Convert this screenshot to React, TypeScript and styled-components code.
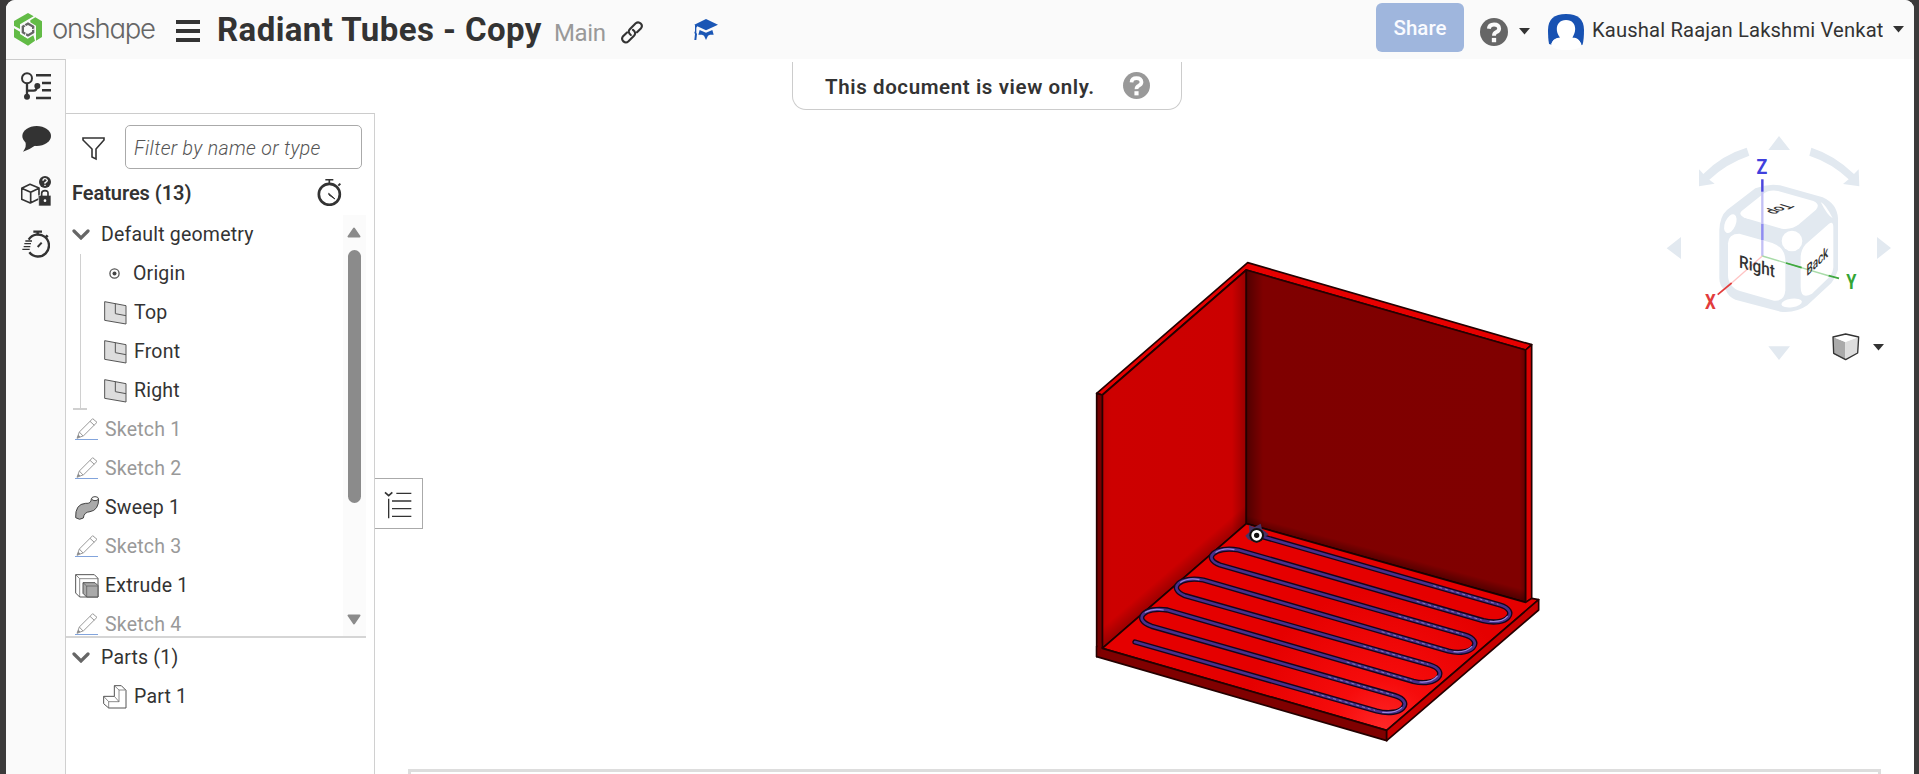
import React from 'react';
import styled, { createGlobalStyle, css } from 'styled-components';

const Global = createGlobalStyle`
  * { box-sizing: border-box; }
  html, body { margin: 0; padding: 0; background: #fff; }
  body { font-family: Roboto, "Liberation Sans", sans-serif; color: #333; overflow: hidden; }
  svg { display: block; flex: none; }
`;

const Window = styled.div`
  width: 1919px;
  height: 774px;
  background: #3b3a3a;
  padding: 0 5px 0 6px;
`;

const Page = styled.div`
  height: 774px;
  display: flex;
  flex-direction: column;
  background: #fff;
  border-radius: 9px 9px 0 0;
  overflow: hidden;
`;

const Header = styled.header`
  height: 59px;
  flex: none;
  display: flex;
  align-items: center;
  background: #fafafa;
  padding-left: 8px;
  white-space: nowrap;
`;

const Wordmark = styled.span`
  width: 121px;
  margin-left: 10px;
  margin-right: 1px;
  font: 300 27.5px/36px Inter, sans-serif;
  font-feature-settings: "cv11";
  letter-spacing: -1.35px;
  color: #666;
  padding-bottom: 3px;
`;

const Title = styled.h1`
  margin: 0 0 0 17px;
  width: 337px;
  font-size: 33px;
  line-height: 40px;
  font-weight: 700;
  letter-spacing: 0.42px;
`;

const Workspace = styled.span`
  width: 67px;
  padding-top: 6px;
  font-size: 24px;
  line-height: 30px;
  letter-spacing: -0.4px;
  color: #999;
`;

const Spacer = styled.div<{ $w?: number }>`
  ${(p) => (p.$w ? css`width: ${p.$w}px; flex: none;` : css`flex: 1;`)}
`;

const ShareButton = styled.button`
  width: 88px;
  height: 49px;
  flex: none;
  margin-bottom: 5px;
  border: 0;
  border-radius: 6px;
  background: #9fb6dd;
  color: #fafbff;
  font: 500 20.5px Roboto, sans-serif;
  padding: 2px 0 0;
`;

const UserName = styled.span`
  width: 291px;
  flex: none;
  overflow: hidden;
  margin-left: 8px;
  font-size: 20.2px;
  line-height: 28px;
  letter-spacing: 0.16px;
`;

const Main = styled.main`
  flex: 1;
  min-height: 0;
  display: flex;
`;

const Rail = styled.nav`
  width: 60px;
  flex: none;
  background: #fafafa;
  border-top: 1px solid #ccc;
  border-right: 1px solid #d0d0d0;
  display: flex;
  flex-direction: column;
  align-items: center;
  gap: 24px;
  padding: 12px 0 0 1px;
`;

const Panel = styled.aside`
  width: 309px;
  flex: none;
  margin-top: 54px;
  border-top: 1px solid #ccc;
  border-right: 1px solid #d0d0d0;
  display: flex;
  flex-direction: column;
`;

const FilterRow = styled.div`
  display: flex;
  align-items: center;
  padding: 11px 0 0 16px;
  gap: 20px;
  & > svg { margin-top: 3px; }
`;

const FilterInput = styled.div`
  width: 237px;
  height: 44px;
  border: 1px solid #aaa;
  border-radius: 5px;
  padding-left: 8px;
  font-size: 19.5px;
  font-style: italic;
  font-weight: 300;
  line-height: 45px;
  letter-spacing: 0.35px;
  color: #555;
`;

const PanelHeading = styled.div`
  height: 46px;
  display: flex;
  align-items: center;
  justify-content: space-between;
  padding: 1px 32px 0 6px;
  font-size: 20px;
  font-weight: 600;
  letter-spacing: -0.05px;
`;

const Scroller = styled.div`
  width: 300px;
  height: 423px;
  display: flex;
  border-bottom: 2px solid #d5d5d5;
  overflow: hidden;
`;

const List = styled.div`
  flex: 1;
`;

const Group = styled.div`
  border-left: 1px solid #d0d0d0;
  margin-left: 14px;
  height: 156px;
  position: relative;
  &::after {
    content: '';
    position: absolute;
    left: -8px;
    bottom: 0;
    width: 14px;
    height: 2px;
    background: #d0d0d0;
  }
`;

const Row = styled.div<{ $indent: number; $gap: number; $muted?: boolean }>`
  height: 39px;
  display: flex;
  align-items: center;
  padding-left: ${(p) => p.$indent}px;
  gap: ${(p) => p.$gap}px;
  font-size: 19.5px;
  letter-spacing: 0.2px;
  color: ${(p) => (p.$muted ? '#999' : '#333')};
`;

const Scrollbar = styled.div`
  width: 23px;
  background: #fbfbfb;
  display: flex;
  flex-direction: column;
  align-items: center;
  padding: 12px 1px 11px 0;
`;

const Thumb = styled.div`
  width: 13px;
  height: 253px;
  margin: 12px 0 auto;
  border-radius: 7px;
  background: #8b8b8b;
`;

const Canvas = styled.section`
  flex: 1;
  position: relative;
  overflow: hidden;
`;

const ListTab = styled.div`
  position: absolute;
  left: -1px;
  top: 419px;
  width: 49px;
  height: 51px;
  border: 1px solid #aaa;
  border-left: 0;
  background: #fff;
  display: flex;
  align-items: center;
  justify-content: center;
  padding-top: 2px;
`;

const Banner = styled.div`
  position: absolute;
  left: 417px;
  top: 3px;
  width: 390px;
  height: 48px;
  border: 1px solid #ccc;
  border-top: 0;
  border-radius: 0 0 14px 14px;
  display: flex;
  align-items: center;
  justify-content: space-between;
  padding: 0 31px 0 32px;
  font-size: 20.5px;
  font-weight: 600;
  letter-spacing: 0.6px;
`;

const BannerText = styled.span`
  padding-top: 2px;
`;

const Placed = styled.div<{ $x: number; $y: number }>`
  position: absolute;
  left: ${(p) => p.$x}px;
  top: ${(p) => p.$y}px;
`;

const BottomFrame = styled.div`
  position: absolute;
  left: 33px;
  right: 33px;
  top: 710px;
  height: 20px;
  border: 3px solid #ddd;
`;

const Logo = () => (
  <svg width="28" height="33" viewBox="0 0 84 99">
    <path d="M42 0 59 10 18 34V48L0 38V24ZM64 13 84 25V72L66 83V38L49 28V22ZM0 46 18 56V63L41 77 58 67 63 83 42 98 0 73Z" fill="#62bb46" />
    <path d="M42 28 61 39V60L42 71 23 60V39ZM42 36 30 43V56L42 63 54 56V43Z" fill="#666" fillRule="evenodd" />
    <path d="M28 31 37 42M62 48 50 51M32 72 37 58" stroke="#fafafa" strokeWidth="3" />
  </svg>
);

const MenuSvg = styled.svg`
  margin-top: 4px;
`;

const MenuIcon = () => (
  <MenuSvg width="24" height="23" fill="#333"><path d="M0 0h24v4H0zM0 9h24v4H0zM0 18h24v4H0z" /></MenuSvg>
);

const LinkSvg = styled.svg`
  margin-top: 5px;
`;

const LinkIcon = () => (
  <LinkSvg width="22" height="23" viewBox="0 0 22 23" fill="none" stroke="#333" strokeWidth="2.1" strokeLinecap="round">
    <path d="M9.8 14C7.4 12 7.2 10 8.8 8.2L14.7 2.3C18.2-.5 22.8 4 19.8 7.5L16 11.3" />
    <path d="M12 8.9C14.4 10.7 14.8 12.8 13 14.8L7.5 20.3C4 23.5-.8 19 2.1 15.2L6 11.4" />
  </LinkSvg>
);

const GradIcon = () => (
  <svg width="24" height="22" viewBox="0 0 72 66" fill="#1a56b5">
    <path d="M36 0 72 17 36 34 10 22 7 26V41L9 45 7 63H1L3 45 1 41 3 36V19L1 17ZM17 33 36 41 55 33 59 47 48 47 42 50 36 63 30 50 24 47 13 47Z" />
  </svg>
);

const Help = ({ size, color, bg }: { size: number; color: string; bg: string }) => (
  <svg width={size} height={size} viewBox="0 0 26 26">
    <circle cx="13" cy="13" r="13" fill={color} />
    <path d="M8.2 10Q8.5 6 13 6T17.8 9.8Q17.7 11.9 15.3 13.1T13 16.5" fill="none" stroke={bg} strokeWidth="3.6" />
    <rect x="11" y="18.5" width="4" height="4" fill={bg} />
  </svg>
);

const Caret = () => <svg width="11" height="7"><path d="M0 0H11L5.5 6.5Z" fill="#333" /></svg>;

const HelpMenu = styled.div`
  display: flex;
  align-items: center;
  gap: 11px;
  margin: 4px 18px 0 16px;
`;

const AvatarSvg = styled.svg`
  margin-top: 5px;
`;

const Avatar = () => (
  <AvatarSvg width="36" height="36" viewBox="0 0 102 108" preserveAspectRatio="none">
    <path d="M3 90Q0 75 0 48Q0 0 51 0T102 48Q102 76 98 92L51 104Z" fill="#1852b2" />
    <path d="M51 18C69 18 77 31 77 45C77 58 72 64 69 71C79 70 91 75 93 91Q85 108 51 108T10 91C12 76 24 71 34 71C30 64 25 58 25 45C25 31 34 18 51 18Z" fill="#fff" />
    <path d="M9 90Q14 74 34 71H69Q89 74 95 91L90 101Q51 116 14 101Z" fill="#fff" />
  </AvatarSvg>
);

const TreeIcon = () => (
  <svg width="30" height="28" viewBox="0 0 90 84" fill="none" stroke="#333">
    <circle cx="18" cy="19" r="15" strokeWidth="6" />
    <path d="M18 35V74M18 56H38Q47 56 48 44" strokeWidth="7" />
    <circle cx="18" cy="74" r="9" fill="#333" stroke="none" />
    <circle cx="49" cy="42" r="9" fill="#333" stroke="none" />
    <path d="M45 10H90M63 33H90M63 55H90M45 78H90" strokeWidth="7.5" />
  </svg>
);

const ChatIcon = () => (
  <svg width="29" height="28" viewBox="0 -6 87 84" fill="#333">
    <ellipse cx="44" cy="30" rx="43" ry="30" />
    <path d="M10 48Q15 61 3 77 23 71 42 57Z" />
  </svg>
);

const BoxLockIcon = () => (
  <svg width="30" height="30" viewBox="0 0 90 90" fill="none" stroke="#333">
    <path d="M27 25 2 37V70L28 81 54 68V36ZM2 37 29 49 54 37M29 49V80" strokeWidth="5" strokeLinejoin="round" />
    <circle cx="72" cy="18" r="18" fill="#333" stroke="none" />
    <path d="M66 14Q66 8 72 8T79 14Q78 18 72 20V23M72 26V30" stroke="#fff" strokeWidth="4" />
    <path d="M53 58H90V90H53Z" fill="#333" stroke="#fafafa" strokeWidth="2" />
    <path d="M62 60V52Q62 44 72 44T81 52V60" strokeWidth="5" />
    <circle cx="72" cy="74" r="4" fill="#fff" stroke="none" />
  </svg>
);

const FastWatchIcon = () => (
  <svg width="28" height="29" viewBox="0 0 84 87" fill="none" stroke="#333">
    <path d="M20 29A33 33 0 1 1 22 67" strokeWidth="7" />
    <path d="M34 5H60M47 5V16" strokeWidth="7" />
    <path d="M71 22 77 16" strokeWidth="8" />
    <path d="M47 51 59 38" strokeWidth="6" />
    <path d="M10 33H30M7 41H27M5 50H25M1 58H23" strokeWidth="4" />
  </svg>
);

const WatchIcon = () => (
  <svg width="25" height="27" viewBox="0 0 75 81" fill="none" stroke="#333">
    <circle cx="37" cy="46" r="31.5" strokeWidth="8" />
    <path d="M25 2H49M37 2V13" strokeWidth="5" />
    <path d="M64 20 70 14" strokeWidth="6" />
    <path d="M35 43 54 60 36 48Z" fill="#333" strokeWidth="3" />
  </svg>
);

const FunnelIcon = () => (
  <svg width="23" height="24" viewBox="0 0 23 24"><path d="M1 1H22V3L14 12V22L10 20V12L1 3Z" fill="none" stroke="#333" strokeWidth="1.6" /></svg>
);

const Chevron = () => (
  <svg width="18" height="11"><path d="M2 2 9 9 16 2" fill="none" stroke="#666" strokeWidth="3.2" strokeLinecap="round" /></svg>
);

const OriginIcon = () => (
  <svg width="11" height="11"><circle cx="5.5" cy="5.5" r="4.6" fill="none" stroke="#555" strokeWidth="1.3" /><circle cx="5.5" cy="5.5" r="2" fill="#444" /></svg>
);

const PlaneIcon = () => (
  <svg width="23" height="24" viewBox="0 0 69 72">
    <path d="M2 2 66 14V69L2 58Z" fill="#ddd" stroke="#555" strokeWidth="3" />
    <path d="M34 8V38L66 44" fill="none" stroke="#555" strokeWidth="3" />
  </svg>
);

const PencilIcon = () => (
  <svg width="24" height="25" viewBox="0 0 72 75">
    <path d="M6 64 13 45 53 5 66 16 26 56ZM13 45 24 57M45 13 58 25" fill="none" stroke="#999" strokeWidth="3" />
    <path d="M6 64 10 53 16 59Z" fill="#888" />
    <path d="M0 67.5H69" stroke="#82a4dc" strokeWidth="3" />
  </svg>
);

const SweepIcon = () => (
  <svg width="24" height="24" viewBox="0 0 72 72" stroke="#444" strokeWidth="3">
    <path d="M2 65Q0 24 32 22Q49 24 49 8L71 8Q71 43 45 47Q27 48 25 66Q14 74 2 65Z" fill="#aaa" />
    <ellipse cx="60" cy="8" rx="10" ry="6" fill="#fff" />
  </svg>
);

const ExtrudeIcon = () => (
  <svg width="24" height="24" viewBox="0 0 72 72" stroke="#555" strokeWidth="3">
    <path d="M2 2H58L69 13V69H14L2 57Z" fill="#fff" />
    <path d="M2 2 14 14H69M14 14V69" fill="none" strokeWidth="2" />
    <path d="M24 26H60L69 35V69H35L24 58Z" fill="#aaa" />
    <path d="M24 26 35 36H68M35 36V69" fill="none" strokeWidth="2" />
  </svg>
);

const PartIcon = () => (
  <svg width="24" height="24" viewBox="0 0 72 72" stroke="#555" strokeWidth="3" fill="#fff">
    <path d="M34 2H55L69 16V69H17L2 56V34H34Z" />
    <path d="M34 2 48 15H68M48 15V50H17V69M2 34 17 50M34 34 48 50" fill="none" strokeWidth="2" />
  </svg>
);

const OutlineIcon = () => (
  <svg width="28" height="28" viewBox="0 0 84 84" fill="none" stroke="#333">
    <path d="M3 4 14 14 25 4" strokeWidth="5" />
    <path d="M14 23V82" strokeWidth="4" />
    <path d="M37 7H82M24 30H82M24 53H82M24 76H82" strokeWidth="4" />
  </svg>
);

const ScrollArrow = ({ down }: { down?: boolean }) => (
  <svg width="14" height="11">
    <path d={down ? 'M1.5 1.5H12.5L7 9.5Z' : 'M1.5 9.5H12.5L7 1.5Z'} fill="#8b8b8b" stroke="#8b8b8b" strokeWidth="2" strokeLinejoin="round" />
  </svg>
);

const tube =
  'M530 855L1260 1065C1319 1083 1282 1130 1210 1112L475 900C405 887 365 925 420 945' +
  'L1155 1155C1214 1173 1177 1221 1105 1203L370 990C300 977 260 1015 315 1037' +
  'L1050 1245C1109 1263 1072 1312 1000 1294L262 1080C194 1069 154 1107 215 1129' +
  'L945 1337C1004 1355 967 1403 890 1383L165 1176';

const tubeHighlights =
  'M1060 1007L1255 1063M1010 1054L1205 1110M955 1098L1150 1153M905 1145L1100 1201' +
  'M850 1188L1045 1243M800 1236L995 1292M745 1280L940 1335M690 1326L885 1381';

const Model = () => (
  <svg width="480" height="524" viewBox="0 0 1440 1572" strokeLinejoin="round">
    <defs>
      <linearGradient id="wallL" x1="0" x2="1"><stop offset="0" stopColor="#c00000" /><stop offset=".06" stopColor="#cd0000" /><stop offset=".9" stopColor="#cb0000" /><stop offset="1" stopColor="#980000" /></linearGradient>
      <linearGradient id="wallR" x1="0" x2="1"><stop offset="0" stopColor="#500000" /><stop offset=".06" stopColor="#7f0000" /><stop offset=".98" stopColor="#800000" /><stop offset="1" stopColor="#640000" /></linearGradient>
      <radialGradient id="floor" gradientUnits="userSpaceOnUse" cx="910" cy="1440" r="420"><stop offset="0" stopColor="#ff2828" /><stop offset=".35" stopColor="#f60c0c" /><stop offset="1" stopColor="#e50000" /></radialGradient>
      <linearGradient id="shadeL" gradientUnits="userSpaceOnUse" x1="283" y1="1008" x2="253" y2="973"><stop offset="0" stopOpacity=".24" /><stop offset="1" stopOpacity="0" /></linearGradient>
      <linearGradient id="shadeR" gradientUnits="userSpaceOnUse" x1="900" y1="935" x2="908" y2="905"><stop offset="0" stopOpacity=".35" /><stop offset="1" stopOpacity="0" /></linearGradient>
    </defs>
    <g stroke="#240000" strokeWidth="5">
      <path d="M50 430 503 38 1355 284 1337 300 499 60 67 435Z" fill="#e60000" />
      <path d="M67 435 499 60V821L67 1195Z" fill="url(#wallL)" />
      <path d="M499 60 1337 300V1057L499 821Z" fill="url(#wallR)" />
      <path d="M50 430 67 435V1195L50 1220Z" fill="#760000" />
      <path d="M1337 300 1355 284V1045L1337 1057Z" fill="#d80000" />
      <path d="M67 1195 499 821 1337 1057 1355 1045 1376 1049 920 1441Z" fill="url(#floor)" />
      <path d="M50 1220V1188L67 1195 920 1441V1472Z" fill="#800000" />
      <path d="M920 1441 1376 1049V1080L920 1472Z" fill="#c80000" />
    </g>
    <path d="M53 1180V1217L58 1217 64 1197V1180Z" fill="#760000" />
    <path d="M69 1193 499 821V740L69 1110Z" fill="url(#shadeL)" />
    <path d="M499 821 1335 1057V1015L499 779Z" fill="url(#shadeR)" />
    <g fill="none" strokeLinecap="round">
      <path d={tube} stroke="#15061c" strokeWidth="16" />
      <path d={tube} stroke="#49308c" strokeWidth="8" />
      <path d={tubeHighlights} stroke="#8879b5" strokeWidth="3" strokeLinecap="butt" strokeDasharray="9 9" />
      <path d="M408 907Q430 892 462 899M302 997Q325 982 357 989M196 1087Q218 1074 250 1080M1230 1114Q1268 1117 1282 1099M1122 1205Q1158 1208 1175 1190M1020 1296Q1055 1298 1072 1278M908 1387Q948 1390 965 1373" stroke="#9a86d9" strokeWidth="3.5" />
    </g>
    <path d="M507 826 523 832 542 821 546 838 566 853 549 865 530 879 504 868 496 857 508 846Z" fill="#473365" />
    <circle cx="530" cy="856" r="22" fill="#111" />
    <circle cx="530" cy="856" r="12" fill="#111" stroke="#fff" strokeWidth="8" />
    <circle cx="530" cy="856" r="6" fill="#111" />
  </svg>
);

const CubeText = styled.text`
  font-family: Roboto, sans-serif;
  text-anchor: middle;
`;

const ViewCube = () => (
  <svg width="240" height="250" viewBox="0 0 720 750">
    <g transform="translate(-60 -60)">
      <g fill="#e2e9f0">
        <path d="M417 78 450 120H385ZM417 750 450 709H385ZM80 415 123 381V447ZM753 414 711 381V447Z" />
        <path d="M320 113 328 137Q258 161 208 209L224 221 177 229V178L190 192Q245 135 320 113Z" />
        <path d="M514 113 508 137Q577 160 626 208L609 222 658 229 656 178 642 192Q585 136 514 113Z" />
        <path d="M346 235Q384 220 420 226L548 262Q591 281 594 325V480Q585 505 574 519L502 586Q468 610 421 605L286 569Q264 560 258 541 238 532 238 505V360Q240 318 261 300Z" />
      </g>
      <g fill="#fff">
        <path d="M369 252Q388 238 414 243L520 273Q542 283 528 299L477 343Q456 360 425 356L318 325Q293 315 305 303Z" />
        <path d="M298 371 397 399Q433 412 436 447V541Q434 575 402 572L300 543Q264 530 264 494V400Q265 371 298 371Z" />
        <path d="M567 341Q580 332 580 352V472Q578 493 565 504L516 551Q482 570 482 530V439Q484 418 497 403Z" />
        <ellipse cx="271" cy="341" rx="16" ry="30" transform="rotate(23 271 341)" />
        <circle cx="456" cy="393" r="31" />
        <ellipse cx="455" cy="579" rx="31" ry="13" transform="rotate(-8 455 579)" />
        <path d="M542 276Q558 284 578 325 562 316 542 276Z" />
      </g>
      <path d="M367 208V438" stroke="#c3c0f5" strokeWidth="7" />
      <path d="M367 208V245" stroke="#4b45dd" strokeWidth="7" />
      <path d="M367 342V390" stroke="#8f8cf0" strokeWidth="7" />
      <path d="M367 438 275 519" stroke="#ffc4c4" strokeWidth="4" />
      <path d="M275 519 233 554" stroke="#e23c3c" strokeWidth="5" />
      <path d="M367 438 568 498" stroke="#a8dba8" strokeWidth="4" />
      <path d="M438 459 485 473M566 497 597 505" stroke="#3fa83f" strokeWidth="5" />
      <CubeText transform="matrix(.87 .24 0 1 351 487)" fontSize="53" fontWeight="500" fill="#333">Right</CubeText>
      <CubeText transform="matrix(.63 -.58 0 1 532 469)" fontSize="47" fontWeight="500" fill="#333">Back</CubeText>
      <CubeText transform="matrix(-.72 .37 -1.1 -.34 404 292)" fontSize="44" fontWeight="500" fill="#333">Top</CubeText>
      <CubeText transform="translate(366 192) scale(.86 1)" fontSize="62" fontWeight="700" fill="#4040dd">Z</CubeText>
      <CubeText transform="translate(211 597) scale(.82 1)" fontSize="62" fontWeight="700" fill="#e23c3c">X</CubeText>
      <CubeText transform="translate(634 538) scale(.82 1)" fontSize="60" fontWeight="700" fill="#34a534">Y</CubeText>
    </g>
  </svg>
);

const ShadedCube = () => (
  <svg width="28" height="28" viewBox="0 0 84 84" strokeLinejoin="round">
    <path d="M3 12 40 27V81L4 62Z" fill="#aaa" />
    <path d="M40 27 80 12 77 60 40 81Z" fill="#ddd" />
    <path d="M3 12 41 3 80 12 40 27Z" fill="#fff" />
    <path d="M3 12 41 3 80 12 77 60 41 80 5 61Z" fill="none" stroke="#333" strokeWidth="4" />
  </svg>
);

const features = [
  { name: 'Sketch 1', kind: 'sketch' },
  { name: 'Sketch 2', kind: 'sketch' },
  { name: 'Sweep 1', kind: 'sweep' },
  { name: 'Sketch 3', kind: 'sketch' },
  { name: 'Extrude 1', kind: 'extrude' },
  { name: 'Sketch 4', kind: 'sketch' },
];

const featureIcon: Record<string, React.ReactNode> = {
  sketch: <PencilIcon />,
  sweep: <SweepIcon />,
  extrude: <ExtrudeIcon />,
};

export default function App() {
  return (
    <Window>
      <Global />
      <Page>
        <Header>
          <Logo />
          <Wordmark>onshape</Wordmark>
          <Spacer $w={2} />
          <MenuIcon />
          <Title>Radiant Tubes - Copy</Title>
          <Workspace>Main</Workspace>
          <LinkIcon />
          <Spacer $w={51} />
          <GradIcon />
          <Spacer />
          <ShareButton>Share</ShareButton>
          <HelpMenu>
            <Help size={28} color="#666" bg="#fafafa" />
            <Caret />
          </HelpMenu>
          <Avatar />
          <UserName>Kaushal Raajan Lakshmi Venkat</UserName>
          <Spacer $w={10} />
          <Caret />
          <Spacer $w={10} />
        </Header>
        <Main>
          <Rail>
            <TreeIcon />
            <ChatIcon />
            <BoxLockIcon />
            <FastWatchIcon />
          </Rail>
          <Panel>
            <FilterRow>
              <FunnelIcon />
              <FilterInput>Filter by name or type</FilterInput>
            </FilterRow>
            <PanelHeading>Features (13)<WatchIcon /></PanelHeading>
            <Scroller>
              <List>
                <Row $indent={6} $gap={11}><Chevron />Default geometry</Row>
                <Group>
                  <Row $indent={28} $gap={13}><OriginIcon />Origin</Row>
                  {['Top', 'Front', 'Right'].map((n) => (
                    <Row key={n} $indent={23} $gap={7}><PlaneIcon />{n}</Row>
                  ))}
                </Group>
                {features.map((f) => (
                  <Row key={f.name} $indent={9} $gap={6} $muted={f.kind === 'sketch'}>
                    {featureIcon[f.kind]}{f.name}
                  </Row>
                ))}
              </List>
              <Scrollbar>
                <ScrollArrow />
                <Thumb />
                <ScrollArrow down />
              </Scrollbar>
            </Scroller>
            <Row $indent={6} $gap={11}><Chevron />Parts (1)</Row>
            <Row $indent={37} $gap={7}><PartIcon />Part 1</Row>
          </Panel>
          <Canvas>
            <ListTab><OutlineIcon /></ListTab>
            <Banner>
              <BannerText>This document is view only.</BannerText>
              <Help size={27} color="#999" bg="#fff" />
            </Banner>
            <Placed $x={705} $y={191}><Model /></Placed>
            <Placed $x={1285} $y={71}><ViewCube /></Placed>
            <Placed $x={1457} $y={274}><ShadedCube /></Placed>
            <Placed $x={1498} $y={285}><Caret /></Placed>
            <BottomFrame />
          </Canvas>
        </Main>
      </Page>
    </Window>
  );
}
